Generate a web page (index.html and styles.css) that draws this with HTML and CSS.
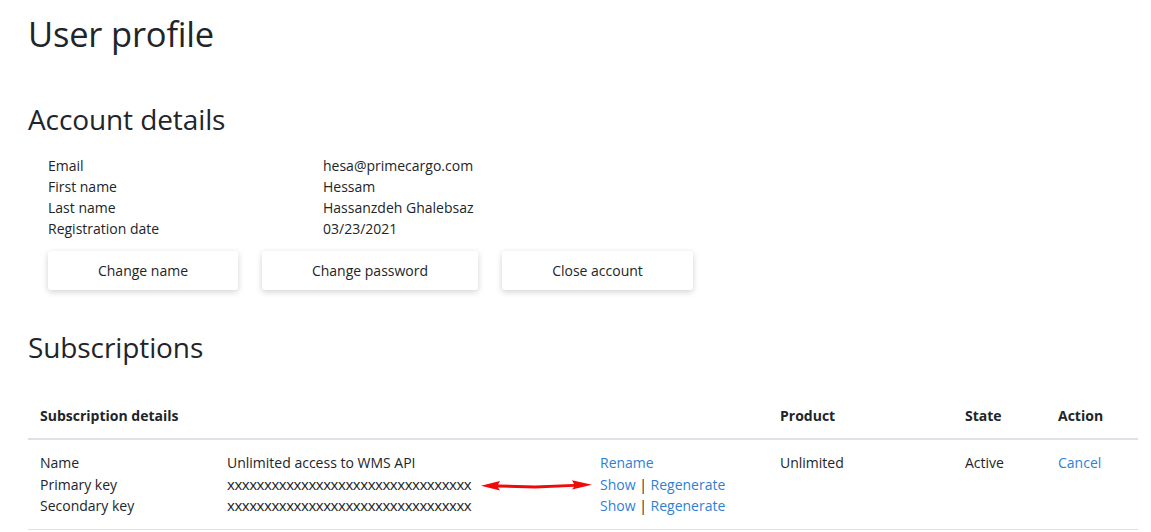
FILE: index.html
```html
<!DOCTYPE html>
<html lang="en">
<head>
<meta charset="utf-8">
<title>User profile</title>
<link rel="stylesheet" href="styles.css">
</head>
<body>
<main class="page">
  <h1 class="title">User profile</h1>

  <section class="account">
    <h2 class="section-title">Account details</h2>
    <dl class="details">
      <dt>Email</dt><dd>hesa@primecargo.com</dd>
      <dt>First name</dt><dd>Hessam</dd>
      <dt>Last name</dt><dd>Hassanzdeh Ghalebsaz</dd>
      <dt>Registration date</dt><dd>03/23/2021</dd>
    </dl>
    <div class="actions">
      <button class="btn btn-name">Change name</button>
      <button class="btn btn-pass">Change password</button>
      <button class="btn btn-close">Close account</button>
    </div>
  </section>

  <section class="subs">
    <h2 class="section-title">Subscriptions</h2>
    <table class="table">
      <thead>
        <tr>
          <th class="c-details">Subscription details</th>
          <th class="c-product">Product</th>
          <th class="c-state">State</th>
          <th class="c-action">Action</th>
        </tr>
      </thead>
      <tbody>
        <tr>
          <td class="c-details">
            <div class="sub-grid">
              <span>Name</span><span>Unlimited access to WMS API</span><span><a href="#">Rename</a></span>
              <span>Primary key</span><span class="key">xxxxxxxxxxxxxxxxxxxxxxxxxxxxxxxxx</span><span><a href="#">Show</a> <span class="sep">|</span> <a href="#">Regenerate</a></span>
              <span>Secondary key</span><span class="key">xxxxxxxxxxxxxxxxxxxxxxxxxxxxxxxxx</span><span><a href="#">Show</a> <span class="sep">|</span> <a href="#">Regenerate</a></span>
            </div>
            <svg class="arrow" width="114" height="12" viewBox="0 0 114 12" aria-hidden="true">
              <path d="M1 6.8 L20 2 L18 5.6 L55 6.4 L94 5 L92 1.2 L112 5.8 L92 10.4 L94 7.8 L55 9.4 L18 8.6 L20 11.6 Z" fill="#f00a0a"/>
            </svg>
          </td>
          <td class="c-product">Unlimited</td>
          <td class="c-state">Active</td>
          <td class="c-action"><a href="#">Cancel</a></td>
        </tr>
      </tbody>
    </table>
  </section>
</main>
</body>
</html>
```

FILE: styles.css
```css
* { box-sizing: border-box; }

html, body {
  margin: 0;
  padding: 0;
  background: #ffffff;
}

body {
  font-family: "Open Sans", "Liberation Sans", sans-serif;
  font-size: 14px;
  line-height: 21px;
  color: #212529;
}

.page {
  padding: 12px 13px 0 28px;
}

.title {
  margin: 0;
  font-size: 34.5px;
  font-weight: 400;
  line-height: 44px;
  letter-spacing: -0.2px;
}

.section-title {
  margin: 0;
  font-size: 28px;
  font-weight: 400;
  line-height: 36px;
  letter-spacing: -0.1px;
}

.account {
  margin-top: 45px;
}

.details {
  display: grid;
  grid-template-columns: 275px auto;
  margin: 18px 0 0 20px;
}

.details dt,
.details dd {
  margin: 0;
  line-height: 21px;
}

.actions {
  display: flex;
  gap: 24px;
  margin: 12px 0 0 20px;
}

.btn {
  height: 39px;
  border: none;
  border-radius: 3px;
  background: #ffffff;
  box-shadow: 0 2px 6px rgba(0, 0, 0, 0.18);
  font-family: inherit;
  font-size: 14px;
  color: #212529;
  padding: 0;
}

.btn-name { width: 190px; }
.btn-pass { width: 216px; }
.btn-close { width: 191px; }

.subs {
  margin-top: 39px;
}

.table {
  width: 1110px;
  border-collapse: collapse;
  margin-top: 29px;
}

.table th {
  text-align: left;
  font-weight: 700;
  padding: 11px 12px 12px;
  border-bottom: 2px solid #dee2e6;
  line-height: 21px;
}

.table td {
  vertical-align: top;
  padding: 12px 12px 12px;
  border-bottom: 1px solid #dee2e6;
  line-height: 21.5px;
}

.c-details { width: 740px; position: relative; }
.c-product { width: 185px; }
.c-state { width: 93px; }
.c-action { width: 92px; }

.sub-grid {
  display: grid;
  grid-template-columns: 187px 373px auto;
  line-height: 21.5px;
}

.key {
  font-size: 15px;
  letter-spacing: -0.45px;
}

a {
  color: #2f7fd6;
  text-decoration: none;
}

.sep {
  color: #212529;
}

.arrow {
  position: absolute;
  left: 452px;
  top: 39px;
}
```
